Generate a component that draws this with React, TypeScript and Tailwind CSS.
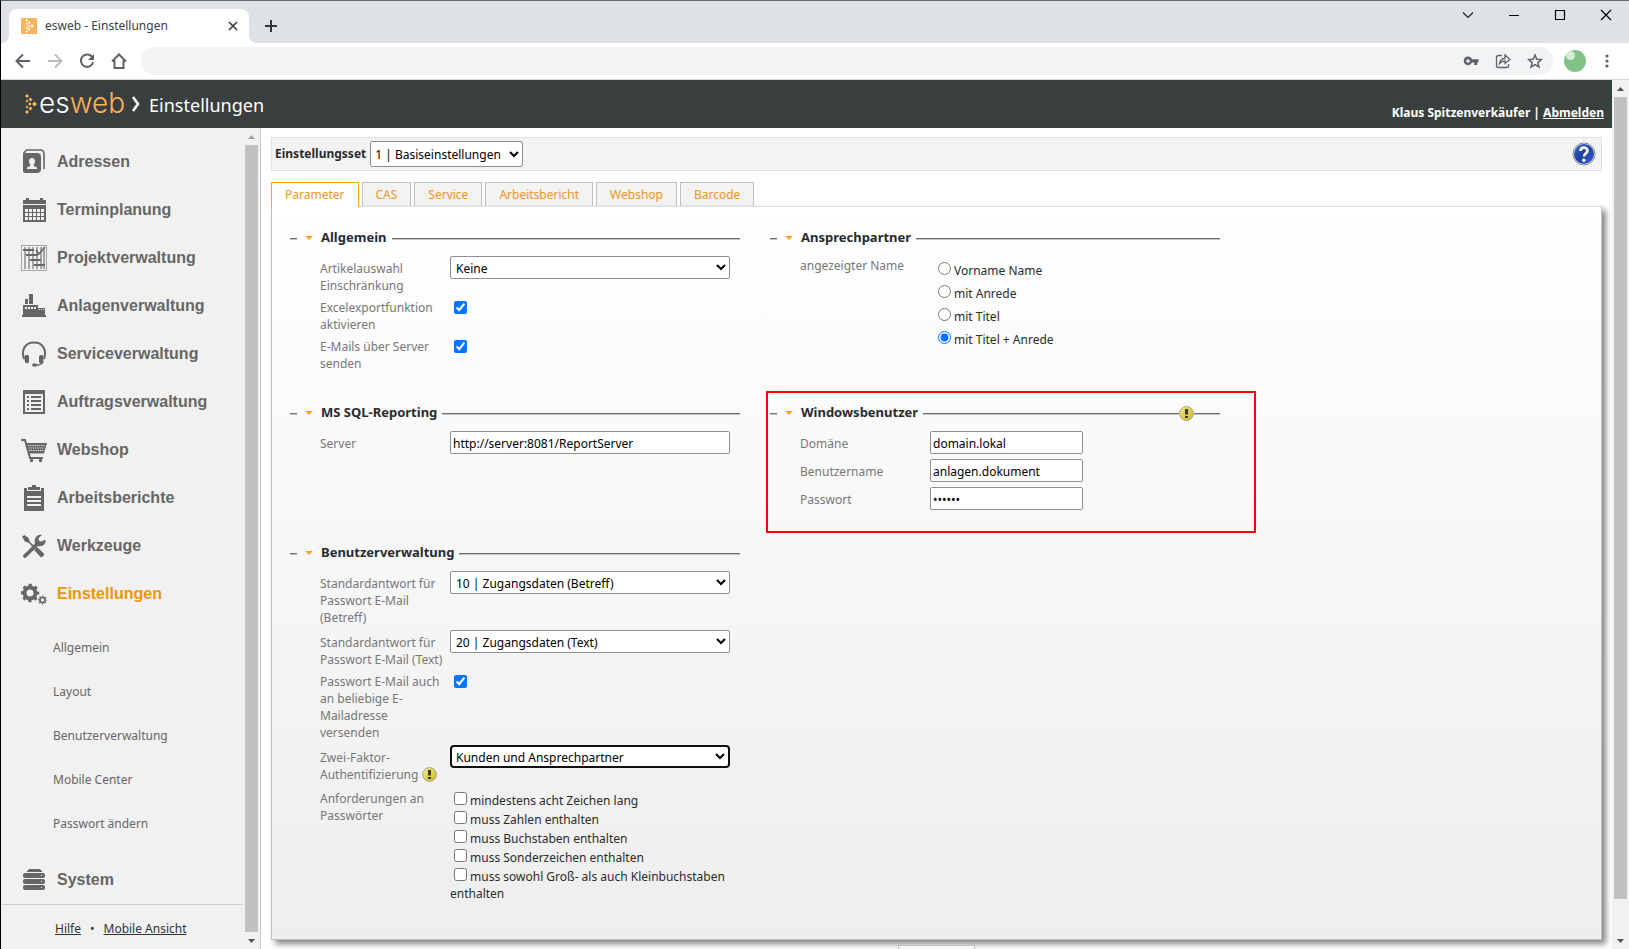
import { useState } from "react";
import type { ReactNode } from "react";

const SANS = "font-['Noto_Sans','Open_Sans',sans-serif]";
const ARIAL = "font-['Liberation_Sans',Arial,sans-serif]";

const TABS = ["Parameter", "CAS", "Service", "Arbeitsbericht", "Webshop", "Barcode"];

const SUB_ITEMS = [
  "Allgemein",
  "Layout",
  "Benutzerverwaltung",
  "Mobile Center",
  "Passwort ändern",
];

const PASSWORD_RULES = [
  "mindestens acht Zeichen lang",
  "muss Zahlen enthalten",
  "muss Buchstaben enthalten",
  "muss Sonderzeichen enthalten",
  "muss sowohl Groß- als auch Kleinbuchstaben enthalten",
];

const NAME_FORMATS = ["Vorname Name", "mit Anrede", "mit Titel", "mit Titel + Anrede"];

/* ---------- icons ---------- */

const ICONS: Record<string, ReactNode> = {
  Adressen: (
    <>
      <path d="M5 1h14q4 0 4 4v15" fill="none" stroke="currentColor" strokeWidth="1.600" />
      <path d="M2.500 4.500 5.500 1" stroke="currentColor" strokeWidth="1.600" />
      <path d="M2 4h14q4 0 4 4v12q0 4-4 4H4q-2 0-2-2z" />
      <path
        d="M11 9c2 0 3 1.500 3 3.300 0 1.500-.7 2.700-1.300 3.400v1.300l3.300 1.500V20H6v-1.500L9.300 17v-1.300C8.700 15 8 13.800 8 12.300 8 10.500 9 9 11 9z"
        fill="#f1f1f1"
      />
    </>
  ),
  Terminplanung: (
    <>
      <path d="M2 3h3V1h3v2h11V1h3v2h3v4H2z" />
      <path d="M2 8h23v17H2z" />
      <path
        d="M4 12h3v3H4zm4 0h3v3H8zm4 0h3v3h-3zm4 0h3v3h-3zm4 0h3v3h-3zM4 16h3v3H4zm4 0h3v3H8zm4 0h3v3h-3zm4 0h3v3h-3zm4 0h3v3h-3zM4 20h3v3H4zm4 0h3v3H8zm4 0h3v3h-3zm4 0h3v3h-3zm4 0h3v3h-3z"
        fill="#f1f1f1"
      />
    </>
  ),
  Projektverwaltung: (
    <>
      <rect x=".5" y=".5" width="25" height="25" fill="none" stroke="#a5a5a5" />
      <path d="M3 2h2v22H3zm4 0h2v22H7zm4 0h2v22h-2zm4 0h2v22h-2zm4 0h2v22h-2zm3 0h2v22h-2z" fill="#a5a5a5" />
      <path d="M2 4h11v2H2zm3 5h12v2H5zm4 5h11v2H9zm4 5h11v2H13z" />
      <path d="m15 5 3 4 6-7" fill="none" stroke="currentColor" strokeWidth="1.500" />
    </>
  ),
  Anlagenverwaltung: (
    <>
      <path d="M4 6h3v5H4zm4-5h4v10H8z" />
      <path d="M2 12h15v3h7v7h1v2H1v-2h1z" />
      <path d="M4 14h2v2H4zm3 0h2v2H7zm3 0h2v2h-2zm3 0h2v2h-2zm5 2h1v1h-1zm2 0h1v1h-1zm2 0h1v1h-1z" fill="#f1f1f1" />
    </>
  ),
  Serviceverwaltung: (
    <>
      <path d="M3 18C0 9 4 1.500 13 1.500S26 9 23 18" fill="none" stroke="currentColor" strokeWidth="2" />
      <path d="M4 14.500c2-1 4-.5 4 1.500v4.500c0 2-2 2-3 1.500-1.500-.7-2-6-1-7.500zM22 14.500c-2-1-4-.5-4 1.500v4.500c0 2 2 2 3 1.500 1.500-.7 2-6 1-7.500z" />
      <path d="M22 20c0 3-3 4-8 4.500" fill="none" stroke="currentColor" strokeWidth="1.500" />
      <ellipse cx="13.500" cy="24" rx="2.500" ry="1.700" />
    </>
  ),
  Auftragsverwaltung: (
    <>
      <path d="M2 1h22v24H2z" />
      <path d="M4 5h18v18H4z" fill="#f1f1f1" />
      <path d="M6 7h2v2H6zm0 4h2v2H6zm0 4h2v2H6zm0 4h2v2H6zm4-12h10v2H10zm0 4h10v2H10zm0 4h10v2H10zm0 4h10v2H10z" />
    </>
  ),
  Webshop: (
    <>
      <path d="M0 3h4l5 18h13" fill="none" stroke="currentColor" strokeWidth="2" />
      <path d="M4.500 6H26l-3 10.500H7.500z" />
      <path
        d="M7 8.500h17M7.500 11h16M8 13.500h15"
        stroke="#f1f1f1"
        strokeWidth="1"
        strokeDasharray="1.200 1"
      />
      <circle cx="10.500" cy="23.500" r="1.700" />
      <circle cx="19.500" cy="23.500" r="1.700" />
    </>
  ),
  Arbeitsberichte: (
    <>
      <path d="M3 3h3v3h14V3h3v23H3z" />
      <path d="M7 2h4V0h4v2h4v3H7z" />
      <path d="M6 11h14v2H6zm0 4h14v2H6zm0 4h14v2H6z" fill="#f1f1f1" />
    </>
  ),
  Werkzeuge: (
    <>
      <path d="M1 3.500 3.500 2l4 3 1.500 4 4 3.500-1.500 1.500L8 10 4 8.500z" />
      <path d="m13 17 3-3 7 6.500q.5 2.500-3 4z" />
      <path d="M24 6.500c2 3-1.500 8-7 6.500L5 24.500c-1.500 1.500-4-1-2.500-2.500L14 10.500c-1.500-6 3-10 7-8.500l-3.500 3 .5 3 3 .5z" />
    </>
  ),
  Einstellungen: (
    <>
      <circle cx="9" cy="12" r="5.500" fill="none" stroke="currentColor" strokeWidth="4" />
      <circle
        cx="9"
        cy="12"
        r="8"
        fill="none"
        stroke="currentColor"
        strokeWidth="2.500"
        strokeDasharray="3.140 3.140"
        strokeDashoffset="1.570"
      />
      <circle cx="21.500" cy="19" r="2.500" fill="none" stroke="currentColor" strokeWidth="1.600" />
      <circle
        cx="21.500"
        cy="19"
        r="3.800"
        fill="none"
        stroke="currentColor"
        strokeWidth="1.400"
        strokeDasharray="1.490 1.490"
        strokeDashoffset=".75"
      />
    </>
  ),
  System: (
    <>
      <path d="M8 2h11l2.500 3h-16z" />
      <rect x="2" y="6" width="22" height="5" rx="2" />
      <rect x="2" y="12" width="22" height="5" rx="2" />
      <rect x="2" y="18" width="22" height="5" rx="2" />
      <path d="M20 8h1v1h-1zm0 6h1v1h-1zm0 6h1v1h-1z" fill="#f1f1f1" />
    </>
  ),
};

function WarningIcon() {
  return (
    <svg viewBox="0 0 15 15" className="size-[15px] shrink-0" aria-label="Hinweis">
      <defs>
        <linearGradient id="warn" x1="0" y1="0" x2="1" y2="1">
          <stop offset="0" stopColor="#f2ee8a" />
          <stop offset="1" stopColor="#cdb81c" />
        </linearGradient>
      </defs>
      <circle cx="7.500" cy="7.500" r="6.900" fill="url(#warn)" stroke="#a9a68a" />
      <path d="M6 3h3v5.500H6zm0 7h3v2H6z" fill="#3c3c3c" />
    </svg>
  );
}

function HelpIcon() {
  return (
    <svg viewBox="0 0 24 24" className="size-6">
      <defs>
        <linearGradient id="help" x1="0" y1="0" x2="1" y2="1">
          <stop offset="0" stopColor="#3f68cf" />
          <stop offset=".5" stopColor="#1c3f9f" />
          <stop offset="1" stopColor="#3c64d8" />
        </linearGradient>
      </defs>
      <circle cx="12" cy="12" r="11" fill="#e8e8e8" stroke="#8c8c8c" />
      <circle cx="12" cy="12" r="10" fill="url(#help)" />
      <path d="M8.500 9c0-4.500 7-4.500 7-.5 0 3-3.500 2.700-3.500 6" fill="none" stroke="#f1f1f1" strokeWidth="2.800" />
      <circle cx="11.800" cy="18.300" r="1.800" fill="#f1f1f1" />
    </svg>
  );
}

// dotted arrow head used in the logo and the favicon
function ArrowDots({ className }: { className: string }) {
  return (
    <svg viewBox="0 0 12 20" className={className} fill="currentColor">
      <path d="M2 0l2 2-2 2-2-2zM5.500 3.500l2 2-2 2-2-2zM9.500 7.500L12 10l-2.500 2.500L7 10zM5.500 12.500l2 2-2 2-2-2zM2 16l2 2-2 2-2-2zM2 5.500L3.500 7 2 8.500.5 7zM2 11.500L3.500 13 2 14.500.5 13zM4.800 8.200L6.600 10l-1.800 1.800L3 10z" />
    </svg>
  );
}

/* ---------- browser window ---------- */

function TabStrip() {
  return (
    <div className="flex h-[42px] shrink-0 bg-[#dee1e6] pl-2">
      <div className="relative mt-2 flex h-[34px] w-60 items-center rounded-t-lg bg-white pr-2 pl-3">
        <span className="absolute bottom-0 -left-2 size-2 bg-[radial-gradient(circle_at_0_0,#dee1e6_8px,white_8px)]" />
        <span className="absolute -right-2 bottom-0 size-2 bg-[radial-gradient(circle_at_100%_0,#dee1e6_8px,white_8px)]" />
        <span className="flex size-4 items-center justify-center bg-[#fbb45c] text-white">
          <ArrowDots className="h-[14px] w-[9px]" />
        </span>
        <span className="ml-2 text-[#3c4043]">esweb - Einstellungen</span>
        <button className="ml-auto p-0.5" aria-label="Tab schließen">
          <svg viewBox="0 0 12 12" className="size-3" stroke="#3c4043" strokeWidth="1.700">
            <path d="m2 2 8 8M10 2l-8 8" />
          </svg>
        </button>
      </div>
      <button className="ml-4 mt-2 flex h-[34px] items-center" aria-label="Neuer Tab">
        <svg viewBox="0 0 12 12" className="size-3" stroke="#333639" strokeWidth="2">
          <path d="M6 0v12M0 6h12" />
        </svg>
      </button>
      <div className="mr-[17px] ml-auto flex h-7 items-center gap-[34px]">
        <button aria-label="Tabs durchsuchen">
          <svg viewBox="0 0 12 12" className="size-3" fill="none" stroke="#222" strokeWidth="1.200">
            <path d="m1 3.500 5 5 5-5" />
          </svg>
        </button>
        <button aria-label="Minimieren">
          <svg viewBox="0 0 12 12" className="size-3" stroke="#000">
            <path d="M1 6.500h10" />
          </svg>
        </button>
        <button aria-label="Maximieren">
          <svg viewBox="0 0 12 12" className="size-3" fill="none" stroke="#000" strokeWidth="1.200">
            <path d="M1.500 1.500h9v9h-9z" />
          </svg>
        </button>
        <button aria-label="Schließen">
          <svg viewBox="0 0 12 12" className="size-3" stroke="#000" strokeWidth="1.200">
            <path d="m1 1 10 10M11 1 1 11" />
          </svg>
        </button>
      </div>
    </div>
  );
}

function Toolbar() {
  return (
    <div className="flex h-[37px] shrink-0 items-center border-b border-[#d5d5d5] bg-white pr-[19px] pl-[14px] text-[#5f6368]">
      <div className="flex items-center gap-4">
        <button aria-label="Zurück">
          <svg viewBox="0 0 16 16" className="size-4" fill="none" stroke="currentColor" strokeWidth="2">
            <path d="M15 8H2M8 1.500 1.500 8 8 14.500" />
          </svg>
        </button>
        <button aria-label="Vorwärts" className="text-[#babcbe]">
          <svg viewBox="0 0 16 16" className="size-4" fill="none" stroke="currentColor" strokeWidth="2">
            <path d="M1 8h13M8 1.500 14.500 8 8 14.500" />
          </svg>
        </button>
        <button aria-label="Neu laden">
          <svg viewBox="0 0 16 16" className="size-4" fill="none" stroke="currentColor" strokeWidth="2">
            <path d="M13.500 4.500A6.200 6.200 0 1 0 14.200 9" />
            <path d="M15 1v6H9z" fill="currentColor" stroke="none" />
          </svg>
        </button>
        <button aria-label="Startseite">
          <svg viewBox="0 0 16 16" className="size-4" fill="none" stroke="currentColor" strokeWidth="2">
            <path d="M1 8.500 8 1.500l7 7M3.500 7v8h9V7" />
          </svg>
        </button>
      </div>
      <div className="ml-[14px] flex h-7 flex-1 items-center justify-end gap-4 rounded-full bg-[#f1f3f4] pr-[10px]">
        <button aria-label="Passwörter verwalten">
          <svg viewBox="0 0 16 16" className="size-4" fill="currentColor">
            <path
              fillRule="evenodd"
              d="M5 3.500c1.800 0 3.300 1 4 2.800h6.500v3.200h-1.300V12h-3V9.500H9A4.300 4.300 0 1 1 5 3.500zm0 2.800a1.700 1.700 0 1 0 0 3.400 1.700 1.700 0 0 0 0-3.400z"
            />
          </svg>
        </button>
        <button aria-label="Teilen">
          <svg viewBox="0 0 16 16" className="size-4" fill="none" stroke="currentColor" strokeWidth="1.300">
            <path d="M7 2.500H3.500q-2 0-2 2v8q0 2 2 2h8q2 0 2-2V11" />
            <path d="M4.500 10.500C5 7 7 5.500 10 5.500V2l5 4.500-5 4V8C7.500 8 6 8.700 4.500 10.500z" />
          </svg>
        </button>
        <button aria-label="Lesezeichen">
          <svg viewBox="0 0 16 16" className="size-4" fill="none" stroke="currentColor" strokeWidth="1.500">
            <path d="m8 2 1.800 4.200 4.500.4-3.400 3 1 4.400L8 11.600 4.100 14l1-4.400-3.400-3 4.500-.4z" />
          </svg>
        </button>
      </div>
      <svg viewBox="0 0 22 22" className="ml-[11px] size-[22px]">
        <circle cx="11" cy="11" r="11" fill="#84c388" />
        <circle cx="6.500" cy="5.500" r="4.500" fill="#d5ecd2" />
      </svg>
      <button className="ml-[18px]" aria-label="Menü">
        <svg viewBox="0 0 6 14" className="h-[14px] w-1.5" fill="currentColor">
          <circle cx="3" cy="2" r="1.600" />
          <circle cx="3" cy="7" r="1.600" />
          <circle cx="3" cy="12" r="1.600" />
        </svg>
      </button>
    </div>
  );
}

function Scrollbar({ topColor, children }: { topColor: string; children: ReactNode }) {
  return (
    <div className="flex w-[17px] shrink-0 flex-col items-center bg-[#f1f1f1]" aria-hidden="true">
      <svg viewBox="0 0 17 17" className={`size-[17px] shrink-0 ${topColor}`} fill="currentColor">
        <path d="m5 11 3.500-4 3.500 4z" />
      </svg>
      {children}
      <svg viewBox="0 0 17 17" className="size-[17px] shrink-0 text-[#505050]" fill="currentColor">
        <path d="m5 7 3.500 4L12 7z" />
      </svg>
    </div>
  );
}

/* ---------- form parts ---------- */

function Section({
  title,
  warning,
  highlight,
  children,
}: {
  title: string;
  warning?: boolean;
  highlight?: boolean;
  children: ReactNode;
}) {
  return (
    <section className="relative">
      <div className="flex h-[21px] items-center">
        <span className="h-0.5 w-[7px] border-t border-[#6d6d6d] bg-[#c4c4c4]" />
        <button className="ml-2 flex w-4 items-center" aria-label={`${title} einklappen`}>
          <svg viewBox="0 0 8 4" className="mb-0.5 h-1 w-2" fill="#f9a825">
            <path d="M0 0h8L4 4z" />
          </svg>
        </button>
        <h2 className="pb-[3px] text-[13px] leading-[18px] font-bold text-[#2b2b2b]">{title}</h2>
        <span className="ml-[5px] h-0.5 flex-1 border-t border-[#6d6d6d] bg-[#c4c4c4]" />
        {warning && (
          <>
            <WarningIcon />
            <span className="h-0.5 w-[26px] border-t border-[#6d6d6d] bg-[#c4c4c4]" />
          </>
        )}
      </div>
      <div className="mt-[7px] flex flex-col gap-1 pr-[10px] pl-[30px]">{children}</div>
      {highlight && (
        <div className="pointer-events-none absolute -top-3 -right-9 -left-1 h-[142px] border-2 border-[#f00]" />
      )}
    </section>
  );
}

function SelectRow({
  id,
  label,
  value,
  focused,
}: {
  id: string;
  label: ReactNode;
  value: string;
  focused?: boolean;
}) {
  return (
    <div className="flex items-start">
      <label htmlFor={id} className="w-[130px] shrink-0 pt-1 leading-[17px] text-[#777]">
        {label}
      </label>
      <select
        id={id}
        className={`h-[23px] w-[280px] bg-white pt-px text-black ${
          focused ? "rounded-sm border-2 border-[#101010]" : "rounded-xs border border-[#8f8f8f] pl-px"
        }`}
      >
        <option>{value}</option>
      </select>
    </div>
  );
}

function CheckRow({ id, label }: { id: string; label: string }) {
  return (
    <div className="flex items-start">
      <label htmlFor={id} className="w-[130px] shrink-0 pt-px leading-[17px] text-[#777]">
        {label}
      </label>
      <input id={id} type="checkbox" defaultChecked className="mt-[3px] ml-1 size-[13px] accent-[#0075ff]" />
    </div>
  );
}

function TextRow({
  id,
  label,
  value,
  wide,
  type = "text",
}: {
  id: string;
  label: string;
  value: string;
  wide?: boolean;
  type?: string;
}) {
  return (
    <div className="mb-px flex items-start">
      <label htmlFor={id} className="w-[130px] shrink-0 pt-1 leading-[17px] text-[#777]">
        {label}
      </label>
      <input
        id={id}
        type={type}
        defaultValue={value}
        className={`h-[23px] rounded-xs border border-[#8f8f8f] bg-white px-0.5 pt-px text-black ${
          wide ? "w-[280px]" : "w-[153px]"
        }`}
      />
    </div>
  );
}

/* ---------- page ---------- */

function Header() {
  return (
    <header className="flex h-12 shrink-0 items-center bg-[#393e3e] pr-2 pl-6 text-white">
      <ArrowDots className="h-5 w-3 text-[#f9b257]" />
      <span className="ml-0.5 pb-0.5 font-['Inter',sans-serif] text-[28px] leading-[44px] font-light">
        es<span className="text-[#f9b257]">web</span>
      </span>
      <svg viewBox="0 0 10 16" className="ml-1.5 h-4 w-[10px]" fill="none" stroke="currentColor" strokeWidth="2.600">
        <path d="m2 1 5 7-5 7" />
      </svg>
      <h1 className="ml-2 pt-0.5 text-[18px]">Einstellungen</h1>
      <div className="ml-auto pt-[18px] font-bold">
        Klaus Spitzenverkäufer |{" "}
        <a href="#abmelden" className="underline">
          Abmelden
        </a>
      </div>
    </header>
  );
}

function NavItem({ name, active }: { name: string; active?: boolean }) {
  return (
    <a href="#nav" className="flex h-12 items-center pl-5">
      <svg viewBox="0 0 26 26" className="size-[26px] shrink-0" fill="currentColor">
        {ICONS[name]}
      </svg>
      <span className={`ml-[10px] text-[16px] font-bold ${ARIAL} ${active ? "text-[#f29400]" : ""}`}>{name}</span>
    </a>
  );
}

function Sidebar() {
  const items = Object.keys(ICONS).filter((name) => name !== "System");

  return (
    <aside className="flex w-[260px] shrink-0 border-r border-[#c8c8c8] bg-[#f1f1f1]">
      <nav className="min-w-0 flex-1 pt-[10px] text-[#666]">
        {items.map((name) => (
          <NavItem key={name} name={name} active={name === "Einstellungen"} />
        ))}
        <ul className="mt-2 mb-[10px]">
          {SUB_ITEMS.map((item) => (
            <li key={item} className="flex h-11 items-center pl-[52px]">
              <a href="#sub">{item}</a>
            </li>
          ))}
        </ul>
        <NavItem name="System" />
        <div className="flex h-12 items-center gap-[9px] border-t border-[#cdcdcd] pl-[54px] text-[#333]">
          <a href="#hilfe" className="underline">
            Hilfe
          </a>
          <span>•</span>
          <a href="#mobil" className="underline">
            Mobile Ansicht
          </a>
        </div>
      </nav>
      <Scrollbar topColor="text-[#a3a3a3]">
        <div className="w-[13px] flex-1 bg-[#c1c1c1]" />
      </Scrollbar>
    </aside>
  );
}

function ParameterPanel() {
  return (
    <div className="h-[734px] shrink-0 border border-[#c0c0c0] border-t-[#dedede] bg-linear-to-b from-white to-[#eeeeee] pt-[21px] pl-[18px] shadow-[4px_4px_6px_#888]">
      <div className="grid grid-cols-[450px_450px] grid-rows-[175px_140px_auto] gap-x-[30px]">
        <Section title="Allgemein">
          <SelectRow id="artikel" label="Artikelauswahl Einschränkung" value="Keine" />
          <CheckRow id="excel" label="Excelexportfunktion aktivieren" />
          <CheckRow id="mails" label="E-Mails über Server senden" />
        </Section>

        <Section title="Ansprechpartner">
          <div className="flex items-start">
            <span className="w-[130px] pt-px leading-[17px] text-[#777]">angezeigter Name</span>
            <div className="mt-1 ml-2 flex flex-col">
              {NAME_FORMATS.map((format, i) => (
                <label key={format} className="flex h-[23px] items-start text-[#2b2b2b]">
                  <input
                    type="radio"
                    name="nameformat"
                    defaultChecked={i === 3}
                    className="mt-0.5 mr-[3px] size-[13px] accent-[#0075ff]"
                  />
                  <span className="mt-0.5 leading-[17px]">{format}</span>
                </label>
              ))}
            </div>
          </div>
        </Section>

        <Section title="MS SQL-Reporting">
          <TextRow id="server" label="Server" value="http://server:8081/ReportServer" wide />
        </Section>

        <Section title="Windowsbenutzer" warning highlight>
          <TextRow id="domain" label="Domäne" value="domain.lokal" />
          <TextRow id="user" label="Benutzername" value="anlagen.dokument" />
          <TextRow id="password" label="Passwort" value="geheim" type="password" />
        </Section>

        <Section title="Benutzerverwaltung">
          <SelectRow
            id="betreff"
            label="Standardantwort für Passwort E-Mail (Betreff)"
            value="10 | Zugangsdaten (Betreff)"
          />
          <SelectRow id="text" label="Standardantwort für Passwort E-Mail (Text)" value="20 | Zugangsdaten (Text)" />
          <CheckRow id="beliebig" label="Passwort E-Mail auch an beliebige E-Mailadresse versenden" />
          <SelectRow
            id="zweifaktor"
            label={
              <>
                Zwei-Faktor-
                <span className="flex items-center gap-1">
                  Authentifizierung
                  <WarningIcon />
                </span>
              </>
            }
            value="Kunden und Ansprechpartner"
            focused
          />
          <div className="flex items-start">
            <span className="w-[130px] shrink-0 pt-[3px] leading-[17px] text-[#777]">
              Anforderungen an
              <br />
              Passwörter
            </span>
            <div className="flex-1 pt-[5px]">
              {PASSWORD_RULES.map((rule) => (
                <label key={rule} className="mb-0.5 block leading-[17px] text-[#2b2b2b]">
                  <input type="checkbox" className="mr-[3px] ml-1 size-[13px] align-baseline" />
                  {rule}
                </label>
              ))}
            </div>
          </div>
        </Section>
      </div>
    </div>
  );
}

export default function App() {
  const [tab, setTab] = useState("Parameter");

  return (
    <div
      className={`${SANS} flex h-screen flex-col overflow-hidden border-t border-l border-t-[#66686b] border-l-black bg-white text-[12px]`}
    >
      <TabStrip />
      <Toolbar />
      <div className="flex min-h-0 flex-1">
        <div className="flex min-w-0 flex-1 flex-col">
          <Header />
          <div className="flex min-h-0 flex-1">
            <Sidebar />
            <main className="flex min-w-0 flex-1 flex-col overflow-hidden pt-[9px] pr-[10px] pl-[10px]">
              <div className="flex h-[34px] shrink-0 items-center border border-[#e2e2e2] bg-[#f3f3f3] pr-[5px] pl-[3px]">
                <label htmlFor="set" className="font-bold text-[#2b2b2b]">
                  Einstellungsset
                </label>
                <select
                  id="set"
                  className="ml-1 h-[26px] w-[153px] rounded-xs border border-[#8f8f8f] bg-white text-black"
                >
                  <option>1 | Basiseinstellungen</option>
                </select>
                <button className="ml-auto" aria-label="Hilfe">
                  <HelpIcon />
                </button>
              </div>

              <div role="tablist" className="mt-[11px] flex shrink-0 gap-[3px]">
                {TABS.map((name) => (
                  <button
                    key={name}
                    role="tab"
                    aria-selected={name === tab}
                    onClick={() => setTab(name)}
                    className={`px-[13px] text-[#f29422] ${
                      name === tab
                        ? "z-10 -mb-px h-[25px] border border-b-0 border-[#f9a825] bg-white"
                        : "h-6 border border-b-0 border-[#c0c0c0] bg-[#f3f3f3]"
                    }`}
                  >
                    {name}
                  </button>
                ))}
              </div>

              <ParameterPanel />

              <div className="mt-[5px] flex shrink-0 justify-center">
                <button className="h-6 w-[77px] border border-[#c0c0c0] bg-[#f8f8f8]" aria-label="Speichern" />
              </div>
            </main>
          </div>
        </div>
        <Scrollbar topColor="text-[#505050]">
          <div className="mb-[33px] w-[13px] flex-1 bg-[#c1c1c1]" />
        </Scrollbar>
      </div>
    </div>
  );
}
